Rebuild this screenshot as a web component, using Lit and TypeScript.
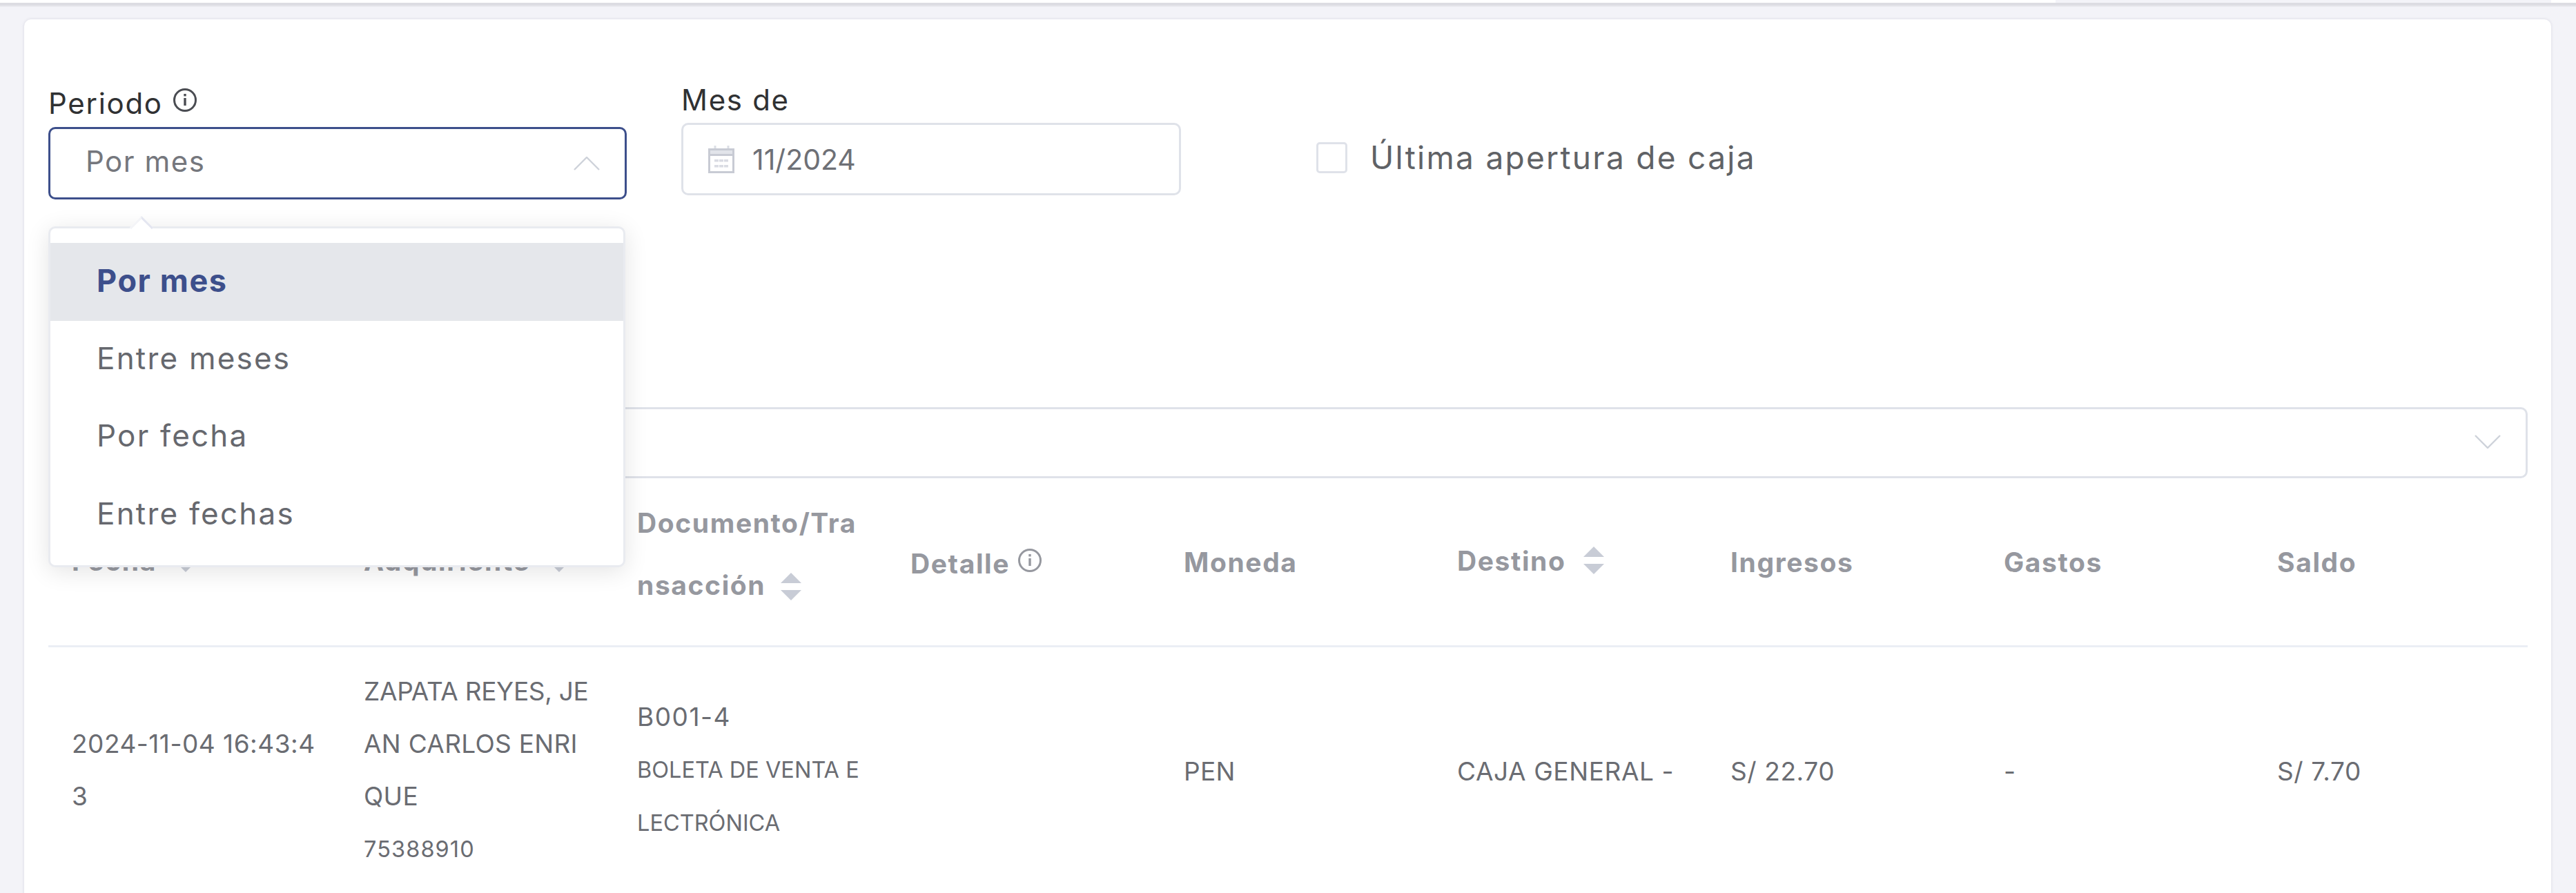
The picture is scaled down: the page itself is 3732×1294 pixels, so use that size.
import { LitElement, html, css, svg } from "lit";
import { customElement } from "lit/decorators.js";

const info = html`<svg class="info" viewBox="0 0 36 36" fill="none" stroke="currentColor"><circle cx="18" cy="18" r="15.5" stroke-width="3"/><path d="M18 15v11" stroke-width="3.4"/><path d="M18 9v3.4" stroke-width="3.4"/></svg>`;
const caret = html`<svg class="caret" viewBox="0 0 30 40"><path d="M15 0L30 15H0z"/><path d="M0 25H30L15 40z"/></svg>`;
const calendar = html`<svg class="cal" viewBox="0 0 38 40" fill="none"><path d="M3 6h32v7H3z" fill="#e2e4ea"/><path d="M10 0v6M29 0v6" stroke="#dcdfe6" stroke-width="3"/><rect x="1.5" y="5.5" width="35" height="33" stroke="#c8cbd4" stroke-width="3"/><path d="M2 13.5h34" stroke="#c8cbd4" stroke-width="3"/>${svg`<g fill="#dadce3"><rect x="9" y="20" width="6" height="3.5"/><rect x="16" y="20" width="6" height="3.5"/><rect x="23" y="20" width="6" height="3.5"/><rect x="9" y="28" width="6" height="3.5"/><rect x="16" y="28" width="6" height="3.5"/><rect x="23" y="28" width="6" height="3.5"/></g>`}</svg>`;

@customElement("app-root")
export class AppRoot extends LitElement {
  static styles = css`
    :host { display: block; width: 3732px; height: 1294px; overflow: hidden; background: #f3f3f8;
      font-family: Inter, "Liberation Sans", sans-serif; color: #606266; letter-spacing: 1.7px; }
    * { box-sizing: border-box; }
    .topbar { height: 4px; background: #fff; display: flex; justify-content: flex-end; }
    .topbar div { width: 718px; background: #f3f3f8; margin-right: 36px; }
    .rule { height: 6px; background: linear-gradient(#dcdce2 50%, #eeeef3); }
    .page { padding: 18px 36px 0 35px; }
    .card { position: relative; background: #fff; border-radius: 10px; height: 1300px; padding: 87px 34px 0 35px;
      box-shadow: 0 0 4px rgba(60, 60, 90, .14); }
    .filters { display: flex; align-items: flex-start; height: 475px; }
    .field { display: flex; flex-direction: column; }
    .field.period { width: 838px; margin-right: 79px; }
    .field.month { width: 724px; margin-right: 196px; }
    .label { font-size: 42px; line-height: 60px; color: #303133; height: 60px; display: flex; align-items: flex-start; gap: 14px; white-space: nowrap; }
    .label.tall { height: 69px; padding-top: 5px; }
    .info { width: 36px; height: 36px; color: #4a4c52; flex: none; }
    .label .info { margin-top: 7px; }
    .control { border: 3px solid #dfe2e9; border-radius: 10px; height: 105px; display: flex; align-items: center; font-size: 42px; background: #fff; }
    .period .control { border-color: #3d4f8b; padding: 0 36px 0 51px; justify-content: space-between; color: #75777d; letter-spacing: 1.5px; }
    .period .control span { padding-bottom: 6px; }
    .month .control { margin-top: 3px; padding-left: 36px; gap: 26px; color: #6e7076; font-size: 41px; letter-spacing: 0; }
    .chev { width: 38px; height: 20px; flex: none; }
    .cal { width: 38px; height: 40px; flex: none; }
    .check { display: flex; align-items: center; gap: 33px; margin-top: 83px; font-size: 46px; line-height: 60px; letter-spacing: 2.3px; color: #606266; white-space: nowrap; }
    .box { width: 45px; height: 45px; border: 3px solid #dfe2e9; border-radius: 5px; flex: none; }
    .wide { height: 103px; border: 3px solid #dfe2e9; border-radius: 10px; display: flex; align-items: center; justify-content: flex-end; padding-right: 36px; padding-bottom: 3px; }
    .grid { display: grid; grid-template-columns: 423px repeat(8, 396px); }
    .head { height: 245px; border-bottom: 3px solid #ebeef5; font-size: 39px; font-weight: 700; color: #96989f; letter-spacing: 1.6px; }
    .th { padding: 0 0 0 34px; display: flex; align-items: center; white-space: nowrap; }
    .th.doc { display: block; line-height: 90px; padding-top: 20px; }
    .th.doc .caret { vertical-align: -8px; margin-left: 22px; }
    .caret { width: 30px; height: 40px; fill: #c8ccd6; flex: none; margin-left: 25px; display: inline-block; }
    .th.fecha, .th.adq { padding-bottom: 3px; }
    .th.fecha .caret, .th.adq .caret { width: 24px; height: 36px; margin-left: 30px; }
    .th.det { gap: 11px; padding-top: 4px; }
    .th.det .info { margin-top: -8px; color: #96989f; }
    .th.top { padding-bottom: 4px; }
    .body { font-size: 37px; line-height: 76px; color: #6a6c72; letter-spacing: .3px; }
    .td { padding: 0 0 6px 34px; white-space: nowrap; display: flex; flex-direction: column; justify-content: center; height: 362px; }
    .td.one { padding-bottom: 2px; }
    .td small { font-size: 32.5px; line-height: 77px; display: block; letter-spacing: 0; }
    .td small.num { letter-spacing: 1.1px; }
    .td.dt { letter-spacing: .5px; }
    .td.doc { letter-spacing: 1.5px; }
    .td.amt { letter-spacing: .6px; }
    .tight { letter-spacing: -.3px; }
    .dd { position: absolute; left: 35px; top: 300px; width: 836px; height: 494px; background: #fff; border: 3px solid #e9ebf0; border-radius: 10px; padding: 21px 0; box-shadow: 0 6px 34px rgba(0, 0, 0, .11); z-index: 2; }
    .arrow { position: absolute; left: 120px; top: -13px; width: 24px; height: 24px; background: #fff; border-top: 3px solid #e4e6f0; border-left: 3px solid #f3f4f7; transform: rotate(45deg); }
    .item { height: 112.5px; display: flex; align-items: center; padding: 0 0 4px 67px; font-size: 44px; letter-spacing: 2.2px; color: #66686e; position: relative; }
    .item.sel { background: #e5e7eb; color: #3d4f8b; font-size: 45px; font-weight: 700; letter-spacing: 1.6px; }
  `;

  render() {
    return html`
      <div class="topbar"><div></div></div>
      <div class="rule"></div>
      <div class="page"><div class="card">
        <div class="filters">
          <div class="field period">
            <div class="label tall">Periodo ${info}</div>
            <div class="control"><span>Por mes</span>
              <svg class="chev" viewBox="0 0 38 20" fill="none" stroke="#ced2da" stroke-width="2.4"><path d="M1 19L19 1l18 18"/></svg></div>
          </div>
          <div class="field month">
            <div class="label">Mes de</div>
            <div class="control">${calendar}<span>11/2024</span></div>
          </div>
          <div class="check"><div class="box"></div><span>Última apertura de caja</span></div>
        </div>
        <div class="wide"><svg class="chev" viewBox="0 0 38 20" fill="none" stroke="#ced2da" stroke-width="2.4"><path d="M1 1l18 18L37 1"/></svg></div>
        <div class="grid head">
          <div class="th fecha"><span>Fecha</span>${caret}</div>
          <div class="th adq"><span>Adquiriente</span>${caret}</div>
          <div class="th doc">Documento/Tra<br />nsacción${caret}</div>
          <div class="th det"><span>Detalle</span>${info}</div>
          <div class="th"><span>Moneda</span></div>
          <div class="th top"><span>Destino</span>${caret}</div>
          <div class="th"><span>Ingresos</span></div>
          <div class="th"><span>Gastos</span></div>
          <div class="th"><span>Saldo</span></div>
        </div>
        <div class="grid body">
          <div class="td dt"><span>2024-11-04 16:43:4</span><span>3</span></div>
          <div class="td"><span class="tight">ZAPATA REYES, JE</span><span>AN CARLOS ENRI</span><span>QUE</span><small class="num">75388910</small></div>
          <div class="td doc"><span>B001-4</span><small>BOLETA DE VENTA E<br />LECTRÓNICA</small></div>
          <div class="td one"></div>
          <div class="td one">PEN</div>
          <div class="td one amt">CAJA GENERAL -</div>
          <div class="td one amt">S/ 22.70</div>
          <div class="td one">-</div>
          <div class="td one amt">S/ 7.70</div>
        </div>
        <div class="dd">
          <div class="arrow"></div>
          <div class="item sel">Por mes</div>
          <div class="item">Entre meses</div>
          <div class="item">Por fecha</div>
          <div class="item">Entre fechas</div>
        </div>
      </div></div>
    `;
  }
}
